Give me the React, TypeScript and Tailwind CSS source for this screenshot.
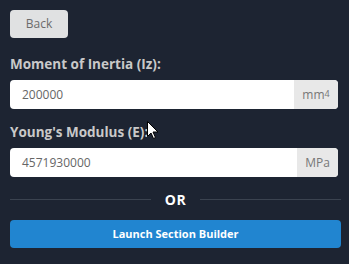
import React from "react";

export default function App() {
  return (
    <div
      className="relative w-[349px] h-[264px] bg-[#1d2432] px-[10px] pt-[10px] flex flex-col"
      style={{ fontFamily: '"Open Sans", sans-serif' }}
    >
      <div>
        <button className="h-[28px] w-[58px] rounded-[4px] bg-[#e0e1e2] text-[12px] text-[#6b6b6b]">
          Back
        </button>
      </div>
      <div className="mt-[16px] h-[20px] leading-[20px] text-[13.5px] font-bold text-[#c9c9c9]">
        Moment of Inertia (Iz):
      </div>
      <div className="mt-[6px] flex h-[29px] w-[328px] rounded-[4px] overflow-hidden bg-white">
        <div className="flex-1 flex items-center pl-[12px] text-[12px] text-[#666]">200000</div>
        <div className="w-[44px] bg-[#e8e8e8] flex items-center justify-center text-[12px] text-[#777]">
          mm<sup className="text-[9px] relative -top-[1px]">4</sup>
        </div>
      </div>
      <div className="mt-[13px] h-[20px] leading-[20px] text-[13.5px] font-bold text-[#c9c9c9]">
        Young's Modulus (E):
      </div>
      <div className="mt-[6px] flex h-[29px] w-[328px] rounded-[4px] overflow-hidden bg-white">
        <div className="flex-1 flex items-center pl-[12px] text-[12px] text-[#666]">4571930000</div>
        <div className="w-[41px] bg-[#e8e8e8] flex items-center justify-center text-[12px] text-[#777]">
          MPa
        </div>
      </div>
      <div className="mt-[13px] flex items-center h-[18px] w-[331px]">
        <div className="flex-1 h-[1px] bg-[#3b4350]" />
        <div className="px-[14px] text-[14px] font-bold text-white tracking-[0.5px]">OR</div>
        <div className="flex-1 h-[1px] bg-[#3b4350]" />
      </div>
      <button className="mt-[12px] h-[28px] w-[331px] rounded-[4px] bg-[#2185d0] text-[11px] font-bold text-white">
        Launch Section Builder
      </button>
      <svg
        className="absolute left-[147px] top-[121px]"
        width="12"
        height="19"
        viewBox="0 0 12 19"
      >
        <path d="M0.5 0.5 L0.5 15.5 L4 12 L6.5 17.5 L8.5 16.5 L6 11 L11 11 Z" fill="#fff" stroke="#000" strokeWidth="1" />
      </svg>
    </div>
  );
}
